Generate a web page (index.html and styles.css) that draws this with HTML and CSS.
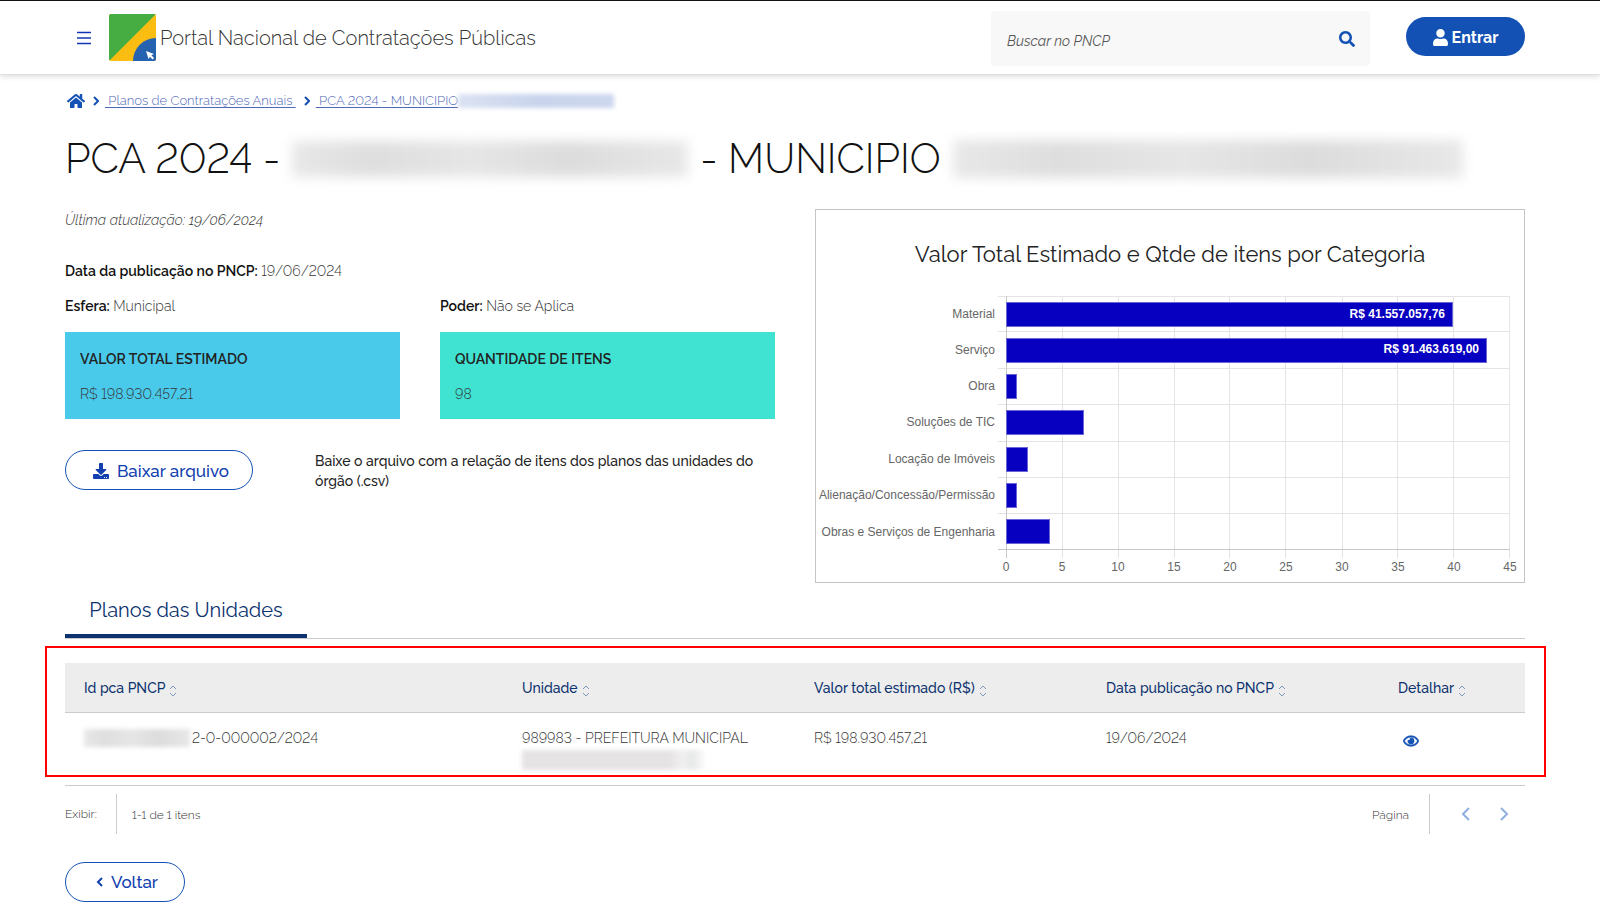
FILE: index.html
```html
<!DOCTYPE html>
<html lang="pt-BR">
<head>
<meta charset="utf-8">
<meta name="viewport" content="width=device-width, initial-scale=1">
<title>Portal Nacional de Contratações Públicas</title>
<link rel="stylesheet" href="styles.css">
</head>
<body>
<header class="header">
  <button class="menu" type="button" aria-label="Menu">
    <svg width="16" height="16" viewBox="0 0 16 16"><path d="M1 2.500h14M1 8h14M1 13.500h14" stroke="currentColor" stroke-width="1.700"/></svg>
  </button>
  <a class="brand" href="#">
    <svg width="47" height="47" viewBox="0 0 47 47" aria-hidden="true">
      <defs><clipPath id="logo-clip"><rect width="47" height="47" rx="2"/></clipPath></defs>
      <g clip-path="url(#logo-clip)">
        <rect width="47" height="47" fill="#fbbd12"/>
        <path d="M0 0h47L0 47z" fill="#46ad42"/>
        <circle cx="47" cy="47" r="23" fill="#2563b0"/>
        <path d="M37 37l8 3-2.600 1.300 2.600 2.700-1.400 1.400-2.700-2.700-1.300 2.600z" fill="#fff"/>
      </g>
    </svg>
    <span>Portal Nacional de Contratações Públicas</span>
  </a>
  <form class="search">
    <input class="search-input" type="text" placeholder="Buscar no PNCP" aria-label="Buscar no PNCP">
    <button class="search-button" type="button" aria-label="Buscar">
      <svg width="16" height="16" viewBox="0 0 512 512"><path fill="currentColor" d="M505 442.700L405.300 343c-4.500-4.500-10.600-7-17-7H372c27.600-35.300 44-79.700 44-128C416 93.100 322.900 0 208 0S0 93.100 0 208s93.100 208 208 208c48.300 0 92.700-16.400 128-44v16.300c0 6.400 2.500 12.500 7 17l99.700 99.700c9.400 9.400 24.600 9.400 33.900 0l28.300-28.300c9.400-9.400 9.400-24.600.1-34zM208 336c-70.700 0-128-57.200-128-128 0-70.700 57.200-128 128-128 70.700 0 128 57.200 128 128 0 70.700-57.200 128-128 128z"/></svg>
    </button>
  </form>
  <button class="login" type="button">
    <svg width="15" height="17" viewBox="0 0 448 512" aria-hidden="true"><path fill="currentColor" d="M224 256c70.700 0 128-57.300 128-128S294.700 0 224 0 96 57.300 96 128s57.300 128 128 128zm89.600 32h-16.700c-22.200 10.200-46.900 16-72.900 16s-50.600-5.800-72.900-16h-16.700C60.200 288 0 348.200 0 422.400V464c0 26.500 21.500 48 48 48h352c26.500 0 48-21.500 48-48v-41.600c0-74.200-60.200-134.400-134.400-134.400z"/></svg>
    Entrar
  </button>
</header>

<main class="page">
  <nav class="crumbs" aria-label="Trilha">
    <a class="home" href="#" aria-label="Início">
      <svg width="18" height="16" viewBox="0 0 576 512"><path fill="currentColor" d="M280.400 148.300L96 300.100V464a16 16 0 0 0 16 16l112.100-.3a16 16 0 0 0 15.900-16V368a16 16 0 0 1 16-16h64a16 16 0 0 1 16 16v95.600a16 16 0 0 0 16 16.100L464 480a16 16 0 0 0 16-16V300L295.700 148.300a12.200 12.200 0 0 0-15.300 0zM571.600 251.500L488 182.600V44a12 12 0 0 0-12-12h-56a12 12 0 0 0-12 12v72.600L318.500 43a48 48 0 0 0-61 0L4.300 251.500a12 12 0 0 0-1.600 16.900l25.500 31A12 12 0 0 0 45.200 301l235.200-193.700a12.200 12.200 0 0 1 15.300 0L530.900 301a12 12 0 0 0 16.900-1.600l25.500-31a12 12 0 0 0-1.700-16.900z"/></svg>
    </a>
    <svg class="crumb-sep" width="6" height="10" viewBox="0 0 6 10"><path d="M1 1l4 4-4 4" fill="none" stroke="currentColor" stroke-width="2"/></svg>
    <a href="#">&nbsp;Planos de Contratações Anuais&nbsp;</a>
    <svg class="crumb-sep" width="6" height="10" viewBox="0 0 6 10"><path d="M1 1l4 4-4 4" fill="none" stroke="currentColor" stroke-width="2"/></svg>
    <a href="#">&nbsp;PCA 2024 - MUNICIPIO</a><span class="mask mask-crumb"></span>
  </nav>

  <h1 class="title">
    <span>PCA 2024 -</span>
    <span class="mask mask-id"></span>
    <span>- MUNICIPIO</span>
    <span class="mask mask-name"></span>
  </h1>

  <div class="overview">
    <section class="details">
      <p class="updated">Última atualização: 19/06/2024</p>
      <p class="published"><strong>Data da publicação no PNCP:</strong> 19/06/2024</p>
      <div class="pair">
        <p><strong>Esfera:</strong> Municipal</p>
        <p><strong>Poder:</strong> Não se Aplica</p>
        <div class="card card-blue"><h2>VALOR TOTAL ESTIMADO</h2><p>R$ 198.930.457,21</p></div>
        <div class="card card-teal"><h2>QUANTIDADE DE ITENS</h2><p>98</p></div>
      </div>
      <div class="download">
        <button class="outline" type="button">
          <svg width="16" height="16" viewBox="0 0 512 512" aria-hidden="true"><path fill="currentColor" d="M216 0h80c13.300 0 24 10.700 24 24v168h87.700c17.800 0 26.700 21.500 14.100 34.100L269.700 378.300c-7.500 7.500-19.800 7.500-27.300 0L90.100 226.100c-12.600-12.600-3.700-34.100 14.100-34.100H192V24c0-13.300 10.700-24 24-24zm296 376v112c0 13.300-10.700 24-24 24H24c-13.300 0-24-10.700-24-24V376c0-13.300 10.700-24 24-24h146.700l49 49c20.100 20.100 52.500 20.100 72.600 0l49-49H488c13.300 0 24 10.700 24 24zm-124 88c0-11-9-20-20-20s-20 9-20 20 9 20 20 20 20-9 20-20zm64 0c0-11-9-20-20-20s-20 9-20 20 9 20 20 20 20-9 20-20z"/></svg>
          Baixar arquivo
        </button>
        <p>Baixe o arquivo com a relação de itens dos planos das unidades do órgão (.csv)</p>
      </div>
    </section>

    <section class="chart">
      <h2>Valor Total Estimado e Qtde de itens por Categoria</h2>
      <svg class="plot" viewBox="0 0 708 289" role="img" aria-label="Itens por categoria">
        <path class="grid" d="M182 3.500h512M182 38.500h512M182 75.500h512M182 111.500h512M182 148.500h512M182 184.500h512M182 220.500h512M246.500 3v262M302.500 3v262M358.500 3v262M413.500 3v262M469.500 3v262M526.500 3v262M581.500 3v262M637.500 3v262M693.500 3v262"/>
        <path class="axis" d="M182 256.500h512M190.500 3v262"/>
        <g class="bars">
          <rect x="190.500" y="9.500" width="446" height="24"/>
          <rect x="190.500" y="45.500" width="480" height="24"/>
          <rect x="190.500" y="81.500" width="10" height="24"/>
          <rect x="190.500" y="117.500" width="77" height="24"/>
          <rect x="190.500" y="154.500" width="21" height="24"/>
          <rect x="190.500" y="190.500" width="10" height="24"/>
          <rect x="190.500" y="226.500" width="43" height="24"/>
        </g>
        <g class="values"><text x="629" y="25">R$ 41.557.057,76</text><text x="663" y="60">R$ 91.463.619,00</text></g>
        <g class="names">
          <text x="179" y="25">Material</text><text x="179" y="61">Serviço</text><text x="179" y="97">Obra</text><text x="179" y="133">Soluções de TIC</text><text x="179" y="170">Locação de Imóveis</text><text x="179" y="206">Alienação/Concessão/Permissão</text><text x="179" y="243">Obras e Serviços de Engenharia</text>
        </g>
        <g class="ticks">
          <text x="190" y="278">0</text><text x="246" y="278">5</text><text x="302" y="278">10</text><text x="358" y="278">15</text><text x="414" y="278">20</text><text x="470" y="278">25</text><text x="526" y="278">30</text><text x="582" y="278">35</text><text x="638" y="278">40</text><text x="694" y="278">45</text>
        </g>
      </svg>
    </section>
  </div>

  <div class="tabs" role="tablist"><button class="tab" type="button" role="tab" aria-selected="true">Planos das Unidades</button></div>

  <div class="table-wrap">
    <table class="plans">
      <thead><tr>
        <th class="wide"><button type="button">Id pca PNCP <svg class="sort" width="8" height="12" viewBox="0 0 8 12"><path d="M1 4l3-3 3 3M1 8l3 3 3-3"/></svg></button></th>
        <th><button type="button">Unidade <svg class="sort" width="8" height="12" viewBox="0 0 8 12"><path d="M1 4l3-3 3 3M1 8l3 3 3-3"/></svg></button></th>
        <th><button type="button">Valor total estimado (R$) <svg class="sort" width="8" height="12" viewBox="0 0 8 12"><path d="M1 4l3-3 3 3M1 8l3 3 3-3"/></svg></button></th>
        <th><button type="button">Data publicação no PNCP <svg class="sort" width="8" height="12" viewBox="0 0 8 12"><path d="M1 4l3-3 3 3M1 8l3 3 3-3"/></svg></button></th>
        <th class="narrow"><button type="button">Detalhar <svg class="sort" width="8" height="12" viewBox="0 0 8 12"><path d="M1 4l3-3 3 3M1 8l3 3 3-3"/></svg></button></th>
      </tr></thead>
      <tbody><tr>
        <td><div class="id-cell"><span class="mask mask-row"></span>2-0-000002/2024</div></td>
        <td>989983 - PREFEITURA MUNICIPAL<span class="mask mask-unit"></span></td>
        <td>R$ 198.930.457,21</td>
        <td>19/06/2024</td>
        <td><a class="view" href="#" aria-label="Detalhar"><svg width="16" height="14" viewBox="0 0 576 512"><path fill="currentColor" d="M288 144a110.900 110.900 0 0 0-31.200 5 55.400 55.400 0 0 1 7.200 27 56 56 0 0 1-56 56 55.400 55.400 0 0 1-27-7.200A111.700 111.700 0 1 0 288 144zm284.500 97.400C518.300 135.600 410.900 64 288 64S57.700 135.600 3.500 241.400a32.300 32.300 0 0 0 0 29.200C57.700 376.400 165.100 448 288 448s230.300-71.600 284.500-177.400a32.300 32.300 0 0 0 0-29.200zM288 400c-98.600 0-189.100-55-237.900-144C98.900 167 189.300 112 288 112s189.100 55 237.900 144C477.100 345 386.700 400 288 400z" stroke="currentColor" stroke-width="24"/></svg></a></td>
      </tr></tbody>
    </table>
    <div class="highlight"></div>
  </div>

  <div class="pager">
    <span class="pager-label">Exibir:</span>
    <span class="pager-count">1-1 de 1 itens</span>
    <span class="pager-page">Página</span>
    <div class="pager-nav">
      <button type="button" aria-label="Anterior"><svg width="9" height="14" viewBox="0 0 9 14"><path d="M8 1L2 7l6 6"/></svg></button>
      <button type="button" aria-label="Próxima"><svg width="9" height="14" viewBox="0 0 9 14"><path d="M1 1l6 6-6 6"/></svg></button>
    </div>
  </div>

  <button class="outline back" type="button">
    <svg width="7" height="10" viewBox="0 0 7 10" aria-hidden="true"><path d="M6 1L2 5l4 4" fill="none" stroke="currentColor" stroke-width="2"/></svg>
    Voltar
  </button>
</main>
</body>
</html>
```
FILE: styles.css
```css
* { box-sizing: border-box; }
body { margin: 0; background: #fff; color: #333; font: 300 14px/20px Raleway, Lato, sans-serif; font-variant-numeric: lining-nums; }
p, h1, h2 { margin: 0; }
button { font: inherit; color: inherit; background: none; border: 0; padding: 0; cursor: pointer; }
a { color: #1351b4; }
svg { display: block; flex: none; }

.header { display: flex; align-items: center; height: 75px; padding: 0 75px 0 76px; border-top: 1px solid #111; border-bottom: 1px solid #e0e0e0; box-shadow: 0 1px 6px rgba(0, 0, 0, .16); }
.menu { margin-right: 17px; color: #1238b0; }
.brand { display: flex; align-items: center; gap: 4px; color: #333; font-size: 20px; line-height: 28px; text-decoration: none; }
.search { display: flex; align-items: center; width: 379px; height: 55px; margin: 2px 0 0 auto; padding: 0 15px 0 16px; background: #f8f8f8; border-radius: 4px; }
.search-input { flex: 1; min-width: 0; padding: 4px 0 0; border: 0; background: none; font: italic 400 14px/20px Raleway, Lato, sans-serif; }
.search-input::placeholder { color: #555; opacity: 1; }
.search-button { color: #1351b4; }
.login { display: flex; align-items: center; justify-content: center; gap: 4px; width: 119px; height: 39px; margin: 0 0 2px 36px; padding-top: 2px; border-radius: 20px; background: #1351b4; color: #fff; font-size: 16px; font-weight: 700; }

.page { padding: 15px 75px 8px 65px; }
.crumbs { display: flex; align-items: center; height: 22px; padding-left: 2px; font-size: 13px; }
.crumbs a { color: #5068b8; text-underline-offset: 2px; }
.crumbs .home { color: #1351b4; }
.crumb-sep { margin: 0 6px 0 8px; color: #1351b4; }

.mask { display: block; flex: none; background: linear-gradient(90deg, #e8e8e8, #dedede 20%, #e6e6e6 45%, #dcdcdc 70%, #e8e8e8); filter: blur(2px); }
.mask-crumb { width: 156px; height: 14px; background: linear-gradient(90deg, #dbe2f2, #c9d4ec 50%, #ccd6ed); }
.mask-id { width: 396px; height: 36px; filter: blur(6px); }
.mask-name { width: 510px; height: 38px; filter: blur(6px); }
.mask-row { width: 106px; height: 18px; }
.mask-unit { width: 184px; height: 20px; margin-top: 2px; background: linear-gradient(90deg, #e6e3e5 80%, #f0f0f0 87%, #e6e8e7 93%, #fff); }

.title { display: flex; align-items: center; gap: 12px; height: 56px; margin-top: 19px; overflow: hidden; color: #111; font-size: 41px; font-weight: 300; line-height: 56px; white-space: nowrap; }

.overview { display: grid; grid-template-columns: 710fr 710fr; gap: 40px; margin-top: 22px; }
.updated { margin-top: 1px; font-style: italic; }
strong { color: #111; font-weight: 600; }
.published { margin-top: 31px; }
.pair { display: grid; grid-template-columns: 1fr 1fr; column-gap: 40px; row-gap: 16px; margin-top: 15px; }
.card { padding: 17px 15px; height: 87px; }
.card h2 { margin-bottom: 15px; color: #222; font-size: 14px; font-weight: 600; line-height: 20px; }
.card-blue { background: #4acaeb; }
.card-teal { background: #40e2d2; }
.download { display: flex; gap: 62px; margin-top: 31px; }
.outline { display: flex; flex: none; align-items: center; justify-content: center; gap: 8px; width: 188px; height: 40px; padding: 1px 0 0 4px; border: 1px solid #1351b4; border-radius: 20px; color: #1240b0; font-size: 17px; font-weight: 500; }
.download p { color: #222; font-weight: 500; max-width: 450px; padding-top: 1px; }

.chart { border: 1px solid #c4c4c4; }
.chart h2 { margin: 30px 0 25px; color: #222; font-size: 22px; font-weight: 400; line-height: 28px; text-align: center; }
.plot { width: 100%; height: auto; font-family: "Liberation Sans", Arial, sans-serif; font-size: 12px; }
.grid { stroke: #e4e4e4; fill: none; }
.axis { stroke: #c8c8c8; fill: none; }
.bars { fill: #0800c0; stroke: #6a66d8; }
.values { fill: #fff; font-weight: 700; text-anchor: end; }
.names { fill: #666; font-weight: 400; text-anchor: end; }
.ticks { fill: #666; font-weight: 400; text-anchor: middle; }

.tabs { display: flex; border-bottom: 1px solid #ccc; }
.tab { width: 242px; height: 55px; padding-top: 3px; border-bottom: 4px solid #0c326f; color: #0c326f; font-size: 20px; font-weight: 400; line-height: 28px; }

.table-wrap { position: relative; margin-top: 24px; }
.highlight { position: absolute; inset: -17px -21px 9px -20px; border: 2px solid #f00; pointer-events: none; }
.plans { width: 100%; border-collapse: collapse; table-layout: fixed; border-bottom: 1px solid #ccc; }
.plans th { width: 20%; height: 49px; padding: 2px 18px 0 19px; background: #ededed; border-bottom: 1px solid #ccc; color: #0c326f; font-weight: 500; text-align: left; }
.plans .wide { width: 30%; }
.plans .narrow { width: 10%; }
.plans th button { display: flex; align-items: center; gap: 4px; white-space: nowrap; }
.plans td { height: 73px; padding: 15px 18px 10px 19px; vertical-align: top; white-space: nowrap; }
.sort { margin-top: 6px; fill: none; stroke: #7f96bd; }
.id-cell { display: flex; align-items: center; gap: 2px; }
.view { display: inline-block; margin: 6px 0 0 5px; }

.pager { display: flex; align-items: center; margin-top: 8px; font-size: 12px; }
.pager-label { width: 51px; padding-top: 1px; }
.pager-count { padding: 11px 15px 9px; border-left: 1px solid #ccc; }
.pager-page { margin-left: auto; padding: 11px 20px 9px 0; border-right: 1px solid #ccc; }
.pager-nav { display: flex; gap: 30px; padding: 0 16px 0 31px; }
.pager-nav path { fill: none; stroke: #8fafe0; stroke-width: 2; }
.back { width: 120px; margin-top: 28px; }
```
